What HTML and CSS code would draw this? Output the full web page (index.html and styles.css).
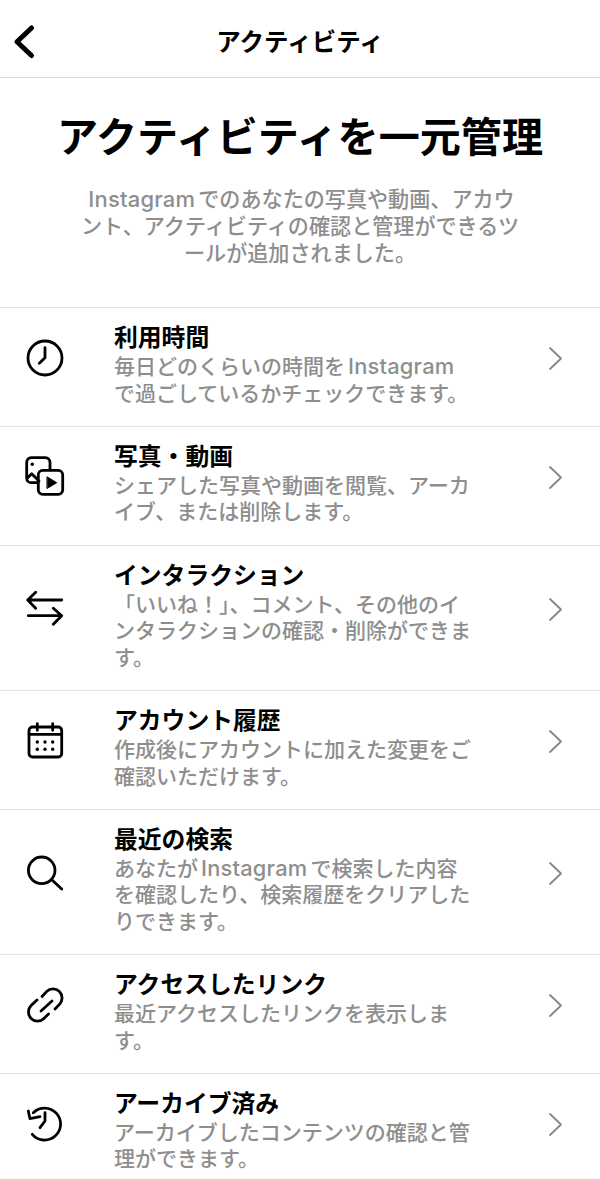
FILE: index.html
```html
<!DOCTYPE html>
<html lang="ja">
<head>
<meta charset="utf-8">
<title>アクティビティ</title>
<link rel="stylesheet" href="styles.css">
</head>
<body>
<header class="topbar">
  <svg class="back" width="26" height="38" viewBox="0 0 26 38"><path d="M20.500 5 L6 18.800 L20.500 32.500" fill="none" stroke="#000" stroke-width="5" stroke-linecap="round" stroke-linejoin="round"/></svg>
  <h1 class="topbar-title">アクティビティ</h1>
</header>
<section class="intro">
  <h2 class="intro-title">アクティビティを一元管理</h2>
  <p class="intro-text"><span class="latin">Instagram</span>でのあなたの写真や動画、アカウ<br>ント、アクティビティの確認と管理ができるツ<br>ールが追加されました。</p>
</section>
<ul class="list">
  <li class="row">
    <span class="icon"><svg width="40" height="40" viewBox="0 0 40 40" class="ico"><circle cx="20" cy="20" r="17"/><path d="M20 9.700 V19.700 L14.300 25.300"/></svg></span>
    <div class="body"><div class="title">利用時間</div><div class="desc">毎日どのくらいの時間を<span class="latin">Instagram</span><br>で過ごしているかチェックできます。</div></div>
    <svg class="chev" width="16" height="26" viewBox="0 0 16 26"><path d="M2 2 L13 12.500 L2 23"/></svg>
  </li>
  <li class="row">
    <span class="icon"><svg width="40" height="40" viewBox="0 0 40 40" class="ico"><path d="M13 26.700 H6.200 a4.500 4.500 0 0 1 -4.500 -4.500 V6.200 a4.500 4.500 0 0 1 4.500 -4.500 H20.500 a4.500 4.500 0 0 1 4.500 4.500 V14"/><path d="M2.700 21.700 L6.700 17.700 L14 25"/><circle cx="7.300" cy="8.300" r="1.700" fill="#000" stroke="none"/><rect x="13.300" y="14.300" width="24.400" height="24" rx="4.500"/><path d="M22.300 21 L31.700 26.700 L22.300 32.300 Z" fill="#000" stroke="#000" stroke-width="1"/></svg></span>
    <div class="body"><div class="title">写真・動画</div><div class="desc">シェアした写真や動画を閲覧、アーカ<br>イブ、または削除します。</div></div>
    <svg class="chev" width="16" height="26" viewBox="0 0 16 26"><path d="M2 2 L13 12.500 L2 23"/></svg>
  </li>
  <li class="row">
    <span class="icon"><svg width="40" height="40" viewBox="0 0 40 40" class="ico"><path d="M36.700 12 H2.700 M10.700 4.300 L2.700 12 L10.700 20.300"/><path d="M3.300 27.700 H36.700 M28.300 20.300 L36.700 27.700 L28.300 36.300"/></svg></span>
    <div class="body"><div class="title">インタラクション</div><div class="desc">「いいね！」、コメント、その他のイ<br>ンタラクションの確認・削除ができま<br>す。</div></div>
    <svg class="chev" width="16" height="26" viewBox="0 0 16 26"><path d="M2 2 L13 12.500 L2 23"/></svg>
  </li>
  <li class="row">
    <span class="icon"><svg width="40" height="40" viewBox="0 0 40 40" class="ico"><rect x="4" y="6" width="32.700" height="30" rx="3.500"/><path d="M4 13.300 H36.700 M12.300 2.700 V9.300 M27.700 2.700 V9.300"/><g fill="#000" stroke="none"><circle cx="12.300" cy="21" r="1.700"/><circle cx="20" cy="21" r="1.700"/><circle cx="27.700" cy="21" r="1.700"/><circle cx="12.300" cy="28.300" r="1.700"/><circle cx="20" cy="28.300" r="1.700"/><circle cx="27.700" cy="28.300" r="1.700"/></g></svg></span>
    <div class="body"><div class="title">アカウント履歴</div><div class="desc">作成後にアカウントに加えた変更をご<br>確認いただけます。</div></div>
    <svg class="chev" width="16" height="26" viewBox="0 0 16 26"><path d="M2 2 L13 12.500 L2 23"/></svg>
  </li>
  <li class="row">
    <span class="icon"><svg width="40" height="40" viewBox="0 0 40 40" class="ico"><circle cx="16.700" cy="17.300" r="13.300"/><path d="M27 27 L36.700 36"/></svg></span>
    <div class="body"><div class="title">最近の検索</div><div class="desc">あなたが<span class="latin">Instagram</span>で検索した内容<br>を確認したり、検索履歴をクリアした<br>りできます。</div></div>
    <svg class="chev" width="16" height="26" viewBox="0 0 16 26"><path d="M2 2 L13 12.500 L2 23"/></svg>
  </li>
  <li class="row">
    <span class="icon"><svg width="40" height="40" viewBox="0 0 40 40" class="ico"><path d="M17 11.500 L21.600 6.600 A9 9 0 0 1 34.400 19.400 L30 24"/><path d="M12 15 L6.100 20.600 A9 9 0 0 0 18.900 33.400 L23.500 29"/><path d="M16 26 L27 16"/></svg></span>
    <div class="body"><div class="title">アクセスしたリンク</div><div class="desc">最近アクセスしたリンクを表示しま<br>す。</div></div>
    <svg class="chev" width="16" height="26" viewBox="0 0 16 26"><path d="M2 2 L13 12.500 L2 23"/></svg>
  </li>
  <li class="row">
    <span class="icon"><svg width="40" height="40" viewBox="0 0 40 40" class="ico"><path d="M8.300 9.700 A16 16 0 1 1 7.300 31.300"/><path d="M3.300 8 L5 15.700 L15 13.700"/><path d="M20 9.700 V18 L15 24.700"/></svg></span>
    <div class="body"><div class="title">アーカイブ済み</div><div class="desc">アーカイブしたコンテンツの確認と管<br>理ができます。</div></div>
    <svg class="chev" width="16" height="26" viewBox="0 0 16 26"><path d="M2 2 L13 12.500 L2 23"/></svg>
  </li>
</ul>
</body>
</html>
```

FILE: styles.css
```css
* { box-sizing: border-box; }
html, body { margin: 0; padding: 0; }
body {
  width: 600px;
  height: 1179px;
  overflow: hidden;
  background: #fff;
  color: #000;
  font-family: Inter, "Noto Sans CJK JP", sans-serif;
}
.topbar {
  height: 78px;
  border-bottom: 1px solid #dbdbdb;
  display: flex;
  align-items: center;
  justify-content: center;
  position: relative;
}
.back { position: absolute; left: 11px; top: 23px; }
.topbar-title {
  margin: 0 0 -6px;
  font-size: 24.500px;
  line-height: 30px;
  font-weight: 700;
}
.intro {
  height: 229px;
  padding-top: 29px;
  text-align: center;
}
.intro-title {
  margin: 0;
  font-size: 41.100px;
  line-height: 60px;
  font-weight: 700;
}
.intro-text {
  margin: 19px 0 0;
  font-size: 21.100px;
  line-height: 27px;
  color: #8e8e8e;
  font-weight: 500;
}
.latin {
  font-size: 1.040em;
  letter-spacing: 0.010em;
  line-height: 0;
  margin: 0 3px;
}
.list { list-style: none; margin: 0; padding: 0; }
.row {
  display: flex;
  align-items: center;
  border-top: 1px solid #e4e4e4;
  padding: 15px 0 18.600px;
}
.icon {
  width: 114px;
  flex: none;
  display: flex;
  padding-left: 25px;
  margin-top: -15px;
}
.ico { fill: none; stroke: #000; stroke-width: 2.800; stroke-linecap: round; stroke-linejoin: round; }
.body { flex: 1; min-width: 0; }
.title {
  font-size: 23.800px;
  line-height: 30px;
  font-weight: 700;
}
.desc {
  font-size: 21px;
  line-height: 26.600px;
  color: #8e8e8e;
  margin-top: 1px;
  white-space: nowrap;
  font-weight: 500;
}
.chev {
  flex: none;
  margin-right: 36px;
  margin-top: -12px;
  fill: none;
  stroke: #868686;
  stroke-width: 1.800;
  stroke-linecap: round;
  stroke-linejoin: round;
}
```
